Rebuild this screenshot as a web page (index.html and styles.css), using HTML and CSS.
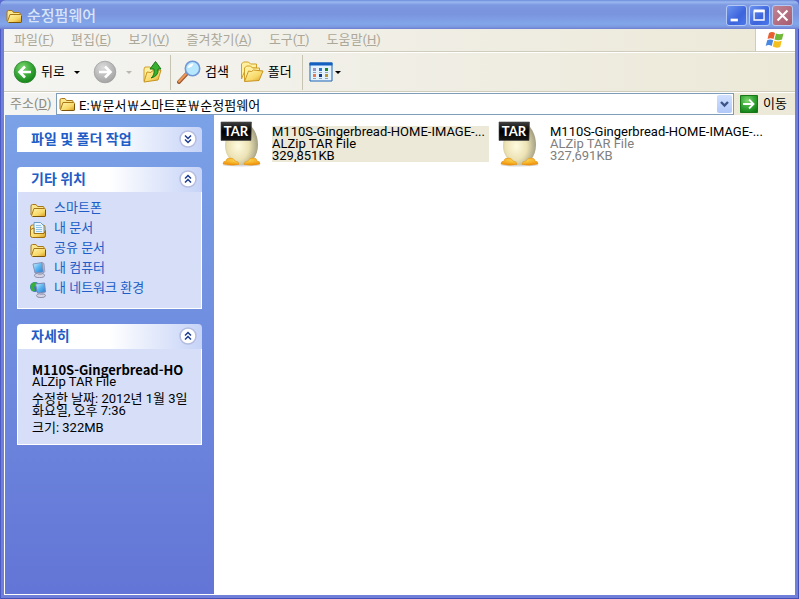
FILE: index.html
```html
<!DOCTYPE html>
<html lang="ko">
<head>
  <meta charset="UTF-8">
  <meta name="viewport" content="width=device-width, initial-scale=1.0">
  <title>순정펌웨어</title>
  <link rel="stylesheet" href="styles.css">
</head>
<body>
  <!-- shared icons -->
  <svg class="sprite" aria-hidden="true">
    <defs>
      <linearGradient id="gold" x1="0" y1="0" x2="1" y2="1">
        <stop offset="0" stop-color="#fff6b0"/>
        <stop offset="0.6" stop-color="#f8d868"/>
        <stop offset="1" stop-color="#d89a20"/>
      </linearGradient>
      <radialGradient id="green" cx="0.4" cy="0.3" r="0.8">
        <stop offset="0" stop-color="#7fd870"/>
        <stop offset="0.5" stop-color="#38a838"/>
        <stop offset="1" stop-color="#0c7a10"/>
      </radialGradient>
      <radialGradient id="grey" cx="0.4" cy="0.3" r="0.8">
        <stop offset="0" stop-color="#dcdcdc"/>
        <stop offset="1" stop-color="#9c9c9c"/>
      </radialGradient>
      <linearGradient id="screen" x1="0" y1="0" x2="1" y2="1">
        <stop offset="0" stop-color="#d8f4ff"/>
        <stop offset="0.5" stop-color="#58b4f0"/>
        <stop offset="1" stop-color="#2878d0"/>
      </linearGradient>
      <radialGradient id="egg" cx="0.4" cy="0.55" r="0.65">
        <stop offset="0" stop-color="#fffbe0"/>
        <stop offset="0.5" stop-color="#ece2b4"/>
        <stop offset="1" stop-color="#98947c"/>
      </radialGradient>
      <radialGradient id="foot" cx="0.5" cy="0.3" r="0.7">
        <stop offset="0" stop-color="#ffe860"/>
        <stop offset="1" stop-color="#f09008"/>
      </radialGradient>
      <linearGradient id="label" x1="0" y1="0" x2="0" y2="1">
        <stop offset="0" stop-color="#404040"/>
        <stop offset="0.5" stop-color="#000"/>
        <stop offset="1" stop-color="#181818"/>
      </linearGradient>
    </defs>
    <symbol id="folder" viewBox="0 0 16 16">
      <path d="M1 13V4q0-1.500 1.500-1.500H6L7.500 4.500H13q1 0 1 1V8" fill="#fbe58a" stroke="#a87818"/>
      <path d="M4 6.500h10.500q1 0 1 1v6q0 1-1 1H2.500q-1-.2-1-1z" fill="url(#gold)" stroke="#a87818"/>
      <path d="M3 14.500h11.500q1 0 1-1.200V8" fill="none" stroke="#7a5408"/>
    </symbol>
    <symbol id="documents" viewBox="0 0 16 16">
      <path d="M.5 13V5q0-2 2-2H13q2 0 2 2v9z" fill="#fbe58a" stroke="#a87818"/>
      <path d="M4 .5h6.500L14 4v7.500H4z" fill="#eaf6ff" stroke="#6c9cc8"/>
      <path d="M6 3.500h5M6 5.500h6M6 7.500h6M6 9.500h6" stroke="#90c4e4"/>
      <path d="M.5 7.500 4 6v5.500h10l1.500-3v5q0 2-1.500 2H2.500q-2 0-2-2z" fill="url(#gold)" stroke="#a07010"/>
    </symbol>
    <symbol id="computer" viewBox="0 0 16 16">
      <path d="M3 2 12 .5 13.500 10 5 11z" fill="url(#screen)" stroke="#8494bc"/>
      <path d="M12 .5l2 1 .8 8-1.300 1.500z" fill="#b4bcd4" stroke="#8088a8" stroke-width=".6"/>
      <ellipse cx="9.500" cy="13.400" rx="5" ry="2.200" fill="#d4d4e4" stroke="#7c7c98" stroke-width=".8"/>
      <path d="M8 11h4v2H8z" fill="#a8acc4"/>
    </symbol>
    <symbol id="network" viewBox="0 0 16 16">
      <circle cx="5" cy="5" r="5" fill="#3474cc"/>
      <path d="M.5 3q2-3 5.500-3L7 3 4 5l1 4-2 .5Q0 7 .5 3z" fill="#38b038"/>
      <path d="M5.500 2 14.500 1 15.500 10 7.500 11z" fill="url(#screen)" stroke="#7888b4"/>
      <ellipse cx="11" cy="13.600" rx="4.500" ry="2" fill="#d4d4e4" stroke="#7c7c98" stroke-width=".8"/>
      <path d="M10 11h3.500v2H10z" fill="#a8acc4"/>
    </symbol>
    <symbol id="folders" viewBox="0 0 24 24">
      <path d="M1.500 19V4l2-2h5l2 2h6v4H6z" fill="#fff0a0" stroke="#d0a028"/>
      <path d="M4.500 21V8l2-2h4l2 2h7v4" fill="#fff0a0" stroke="#d0a028"/>
      <path d="M4.500 21.500 8.500 11l3 .5 2-1.500 9.500 1-4 9.500z" fill="url(#gold)" stroke="#c89420"/>
    </symbol>
    <symbol id="tar" viewBox="0 0 48 48">
      <ellipse cx="22.500" cy="45" rx="19" ry="1.500" fill="#d8d8d8"/>
      <path d="M24 3C34 3 39 15 39 25 39 36 32 45 23 45S6 36 6 26C6 15 14 3 24 3z" fill="url(#egg)"/>
      <path d="M4 44q0-3 3-3 0-3 4-3 4 0 5 3 4 0 4 3.500-8 1.500-16-.5zM41 44q0-3-3-3 0-3-4-3-4 0-5 3-4 0-4 3.500 8 1.500 16-.5z" fill="url(#foot)" stroke="#e09018" stroke-width=".5"/>
      <path d="M2 2h30.500l-.5 18.500H2z" fill="url(#label)" stroke="#484848" stroke-width=".6"/>
    </symbol>
    <symbol id="up-chevrons" viewBox="0 0 18 18">
      <circle cx="9" cy="9" r="8" fill="#fff" stroke="#b4bce0" stroke-width="1.500"/>
      <path d="M6 8.500l3-3 3 3M6 12.500l3-3 3 3" fill="none" stroke="#1c3c90" stroke-width="1.500"/>
    </symbol>
    <symbol id="down-chevrons" viewBox="0 0 18 18">
      <circle cx="9" cy="9" r="8" fill="#fff" stroke="#b4bce0" stroke-width="1.500"/>
      <path d="M6 5.500l3 3 3-3M6 9.500l3 3 3-3" fill="none" stroke="#1c3c90" stroke-width="1.500"/>
    </symbol>
  </svg>

  <div class="window">
    <header class="titlebar">
      <svg class="icon16"><use href="#folder"/></svg>
      <h1>순정펌웨어</h1>
      <div class="controls">
        <button class="control" aria-label="최소화">
          <svg viewBox="0 0 21 21"><path d="M4 14h8v3H4z" fill="#fff"/></svg>
        </button>
        <button class="control" aria-label="최대화">
          <svg viewBox="0 0 21 21"><path d="M4.500 6v9.500h11V5h-11" fill="none" stroke="#fff" stroke-width="1.500"/><path d="M4 4h12v3H4z" fill="#fff"/></svg>
        </button>
        <button class="control close" aria-label="닫기">
          <svg viewBox="0 0 21 21"><path d="M5 5l11 11M16 5l-11 11" stroke="#fff" stroke-width="2.400"/></svg>
        </button>
      </div>
    </header>

    <div class="menubar">
      <nav class="menu">
        <button>파일(<u>F</u>)</button>
        <button>편집(<u>E</u>)</button>
        <button>보기(<u>V</u>)</button>
        <button>즐겨찾기(<u>A</u>)</button>
        <button>도구(<u>T</u>)</button>
        <button>도움말(<u>H</u>)</button>
      </nav>
      <div class="flag">
        <svg viewBox="0 0 20 18">
          <path d="M4 2q3-1.800 6 0L8.500 8q-3-1.500-6 0z" fill="#e86030"/>
          <path d="M11 2.400q3.500 1.500 7.500 0L17 8.500q-4 1.500-7.500 0z" fill="#70b838"/>
          <path d="M2.200 9.300q3-1.500 6 0L6.700 15q-3-1.800-6 0z" fill="#4888e0"/>
          <path d="M9.200 9.700q3.500 1.500 7.500 0L15.200 16q-4 1.500-7.500-.5z" fill="#f4c020"/>
        </svg>
      </div>
    </div>

    <div class="toolbar">
      <button class="tool">
        <svg class="icon24" viewBox="0 0 24 24">
          <circle cx="12" cy="12" r="10.800" fill="url(#green)" stroke="#2c8430" stroke-width=".8"/>
          <path d="M18 12H7M12 6.500 6.500 12l5.500 5.500" fill="none" stroke="#fff" stroke-width="2.600"/>
        </svg>
        <span>뒤로</span>
      </button>
      <button class="arrow" aria-label="뒤로 목록"></button>
      <button class="tool forward" aria-label="앞으로" disabled>
        <svg class="icon24" viewBox="0 0 24 24">
          <circle cx="12" cy="12" r="10.800" fill="url(#grey)" stroke="#a0a0a0" stroke-width=".8"/>
          <path d="M6 12h11M12 6.500l5.500 5.500-5.500 5.500" fill="none" stroke="#fff" stroke-width="2.600"/>
        </svg>
      </button>
      <button class="arrow" aria-label="앞으로 목록" disabled></button>
      <button class="tool up" aria-label="위로">
        <svg class="icon24" viewBox="0 0 24 24">
          <path d="M4 21V9l1-2h5l2 2h6v5" fill="#fff0a0" stroke="#d0a028"/>
          <path d="M4 22 7 12l4 .5 1-1.500 9-1-3 10z" fill="url(#gold)" stroke="#c89420"/>
          <path d="M11 18q4-3 3-9h-4l5.500-7.500L21 9h-3q1 7-7 9z" fill="#38b030" stroke="#187818"/>
        </svg>
      </button>
      <span class="separator"></span>
      <button class="tool">
        <svg class="icon24" viewBox="0 0 24 24">
          <path d="M2 22l8-8.500" stroke="#985830" stroke-width="4" stroke-linecap="round"/>
          <path d="M2 21.500l7-7.500" stroke="#f09858" stroke-width="2" stroke-linecap="round"/>
          <circle cx="15.500" cy="8.500" r="7.200" fill="#b8e8ff" stroke="#7098d8" stroke-width="1.600"/>
          <path d="M10.500 8q1-4.500 6-4.500-1 4-6 4.500z" fill="#fff"/>
        </svg>
        <span>검색</span>
      </button>
      <button class="tool folders">
        <svg class="icon24"><use href="#folders"/></svg>
        <span>폴더</span>
      </button>
      <span class="separator"></span>
      <button class="tool views" aria-label="보기">
        <svg class="icon24" viewBox="0 0 24 24">
          <path d="M1 3h22v18H1z" fill="#e4f2fe" stroke="#1c64b4"/>
          <path d="M.5 2.500h23v3H.5z" fill="#1460c0"/>
          <path d="M4 8h3v3H4z" fill="#9c90c0"/>
          <path d="M10 8h3v3h-3z" fill="#2c78cc"/>
          <path d="M16 8h3v3h-3z" fill="#208820"/>
          <path d="M4 14h3v3H4z" fill="#e87850"/>
          <path d="M10 14h3v3h-3z" fill="#103c88"/>
          <path d="M16 14h3v3h-3z" fill="#b89830"/>
          <path d="M4 12.500h3M10 12.500h3M16 12.500h3M4 18.500h3M10 18.500h3M16 18.500h3" stroke="#90a0b8"/>
        </svg>
      </button>
      <button class="arrow views-arrow" aria-label="보기 목록"></button>
    </div>

    <form class="address">
      <label for="path">주소(<u>D</u>)</label>
      <div class="combo">
        <svg class="icon16"><use href="#folder"/></svg>
        <input id="path" type="text" value="E:￦문서￦스마트폰￦순정펌웨어">
        <button type="button" class="drop" aria-label="주소 목록">
          <svg viewBox="0 0 15 18"><path d="M4 7l3.500 3.500L11 7" fill="none" stroke="#3c5488" stroke-width="2.400"/></svg>
        </button>
      </div>
      <button type="button" class="go">
        <svg viewBox="0 0 18 18">
          <path d="M.5.500h17v17H.5z" fill="url(#green)" stroke="#187818"/>
          <path d="M3 9h10M9 4.500 13.500 9 9 13.500" fill="none" stroke="#fff" stroke-width="1.800"/>
        </svg>
        <span>이동</span>
      </button>
    </form>

    <div class="content">
      <aside class="sidebar">
        <section class="panel">
          <div class="panel-head">
            <h2>파일 및 폴더 작업</h2>
            <button aria-label="펼치기"><svg><use href="#down-chevrons"/></svg></button>
          </div>
        </section>

        <section class="panel">
          <div class="panel-head">
            <h2>기타 위치</h2>
            <button aria-label="접기"><svg><use href="#up-chevrons"/></svg></button>
          </div>
          <ul class="places">
            <li><a href="#"><svg class="icon16"><use href="#folder"/></svg>스마트폰</a></li>
            <li><a href="#"><svg class="icon16"><use href="#documents"/></svg>내 문서</a></li>
            <li><a href="#"><svg class="icon16"><use href="#folder"/></svg>공유 문서</a></li>
            <li><a href="#"><svg class="icon16"><use href="#computer"/></svg>내 컴퓨터</a></li>
            <li><a href="#"><svg class="icon16"><use href="#network"/></svg>내 네트워크 환경</a></li>
          </ul>
        </section>

        <section class="panel">
          <div class="panel-head">
            <h2>자세히</h2>
            <button aria-label="접기"><svg><use href="#up-chevrons"/></svg></button>
          </div>
          <div class="details">
            <h3>M110S-Gingerbread-HO</h3>
            <p>ALZip TAR File</p>
            <p>수정한 날짜: 2012년 1월 3일<br>화요일, 오후 7:36</p>
            <p>크기: 322MB</p>
          </div>
        </section>
      </aside>

      <main class="files">
        <article class="file selected">
          <svg class="icon48" viewBox="0 0 48 48">
            <use href="#tar"/>
            <text x="17" y="16" class="tar-text" text-anchor="middle">TAR</text>
          </svg>
          <div class="file-info">
            <h4>M110S-Gingerbread-HOME-IMAGE-...</h4>
            <p>ALZip TAR File</p>
            <p>329,851KB</p>
          </div>
        </article>
        <article class="file">
          <svg class="icon48" viewBox="0 0 48 48">
            <use href="#tar"/>
            <text x="17" y="16" class="tar-text" text-anchor="middle">TAR</text>
          </svg>
          <div class="file-info">
            <h4>M110S-Gingerbread-HOME-IMAGE-...</h4>
            <p>ALZip TAR File</p>
            <p>327,691KB</p>
          </div>
        </article>
      </main>
    </div>
  </div>
</body>
</html>
```

FILE: styles.css
```css
* {
  box-sizing: border-box;
}

body {
  margin: 0;
  background: #5a6ad0;
  font-family: Roboto, "Noto Sans CJK KR", sans-serif;
  font-size: 13px;
  line-height: 16px;
  color: #000;
}

h1, h2, h3, h4, p, ul {
  margin: 0;
  padding: 0;
}

button {
  padding: 0;
  border: 0;
  background: none;
  font: inherit;
  color: inherit;
}

svg {
  display: block;
  flex: none;
}

.sprite {
  position: absolute;
  width: 0;
  height: 0;
}

.icon16 {
  width: 16px;
  height: 16px;
}

.icon24 {
  width: 24px;
  height: 24px;
}

.icon48 {
  width: 48px;
  height: 48px;
}

.window {
  min-height: 100vh;
  display: flex;
  flex-direction: column;
  padding: 0 4px 4px;
  border-radius: 6px 6px 0 0;
  background: #7080d8;
  box-shadow: inset 1px 0 #4c5ac4, inset -1px 0 #4450b8, inset 0 -1px #4450b8;
}

/* title bar */
.titlebar {
  display: flex;
  align-items: center;
  height: 29px;
  margin: 0 -4px;
  padding: 2px 6px 0;
  border-radius: 6px 6px 0 0;
  background: linear-gradient(#6c8cdc 0, #9cb8f0 2px, #7c98e0 5px, #7a94de 14px, #82a6ea 24px, #7c98e0 27px, #6c7cd0 29px);
}

.titlebar h1 {
  flex: 1;
  margin-left: 5px;
  font-size: 15px;
  font-weight: 500;
  color: #d8e4f8;
}

.controls {
  display: flex;
  gap: 2px;
}

.control {
  width: 21px;
  height: 21px;
  border: 1px solid #b4c8f4;
  border-radius: 3px;
  background: linear-gradient(135deg, #6c94f0, #3c64dc 60%, #4c78ec);
}

.control svg {
  width: 19px;
  height: 19px;
}

.control.close {
  background: linear-gradient(135deg, #c08494, #a85c70);
}

/* menu */
.menubar {
  display: flex;
  height: 23px;
  border-bottom: 1px solid #d0ccbc;
  background: linear-gradient(90deg, #f4f4f2, #ece9d8);
}

.menu {
  flex: 1;
  display: flex;
  align-items: center;
  gap: 17px;
  padding-left: 10px;
  color: #aca899;
}

.flag {
  width: 40px;
  padding: 2px 9px;
  border-left: 1px solid #d0ccbc;
  background: #fff;
}

.flag svg {
  width: 20px;
  height: 18px;
}

/* toolbar */
.toolbar {
  display: flex;
  align-items: center;
  height: 40px;
  padding-left: 9px;
  border-top: 1px solid #fff;
  border-bottom: 1px solid #d0ccbc;
  background: linear-gradient(90deg, #f4f4f2, #ece9d8);
}

.tool {
  display: flex;
  align-items: center;
  gap: 4px;
}

.forward {
  margin-left: 13px;
}

.up {
  margin-left: 8px;
}

.folders {
  margin-left: 11px;
}

.arrow {
  margin-left: 9px;
  border: 3px solid transparent;
  border-top-color: #000;
  border-bottom: 0;
}

.arrow:disabled {
  border-top-color: #b8b8b0;
}

.views-arrow {
  margin-left: 2px;
}

.separator {
  width: 1px;
  height: 35px;
  margin: 0 6px;
  background: #c8c4b4;
}

.folders + .separator {
  margin-left: 10px;
}

/* address */
.address {
  display: flex;
  align-items: center;
  height: 23px;
  border-top: 1px solid #fff;
  background: linear-gradient(90deg, #f4f4f2, #ece9d8);
}

.address label {
  width: 52px;
  padding-left: 6px;
  color: #8c8a80;
}

.combo {
  flex: 1;
  display: flex;
  align-items: center;
  height: 22px;
  padding: 0 1px 0 2px;
  border: 1px solid #7f9db9;
  background: #fff;
}

.combo input {
  flex: 1;
  min-width: 0;
  height: 20px;
  margin-left: 4px;
  padding: 0;
  border: 0;
  outline: 0;
  background: none;
  font: inherit;
}

.drop {
  width: 15px;
  height: 18px;
  border-radius: 2px;
  background: linear-gradient(#d0e0ff, #b0c8f8);
}

.go {
  display: flex;
  align-items: center;
  gap: 5px;
  padding: 0 8px 0 6px;
}

.go svg {
  width: 18px;
  height: 18px;
}

/* body */
.content {
  flex: 1;
  display: flex;
  border: 1px solid #fff;
  border-top: 0;
  background: #fff;
}

.sidebar {
  display: flex;
  flex-direction: column;
  gap: 15px;
  flex: none;
  width: 209px;
  padding: 12px;
  background: linear-gradient(#7ba2e7, #6375d6);
}

.panel-head {
  display: flex;
  align-items: center;
  justify-content: space-between;
  height: 25px;
  padding: 0 5px 2px 14px;
  border-radius: 4px 4px 0 0;
  background: linear-gradient(90deg, #fff 50%, #c6d3f7);
}

.panel-head h2 {
  font-size: 14px;
  font-weight: 700;
  color: #215dc6;
}

.panel-head svg {
  width: 18px;
  height: 18px;
}

.places {
  padding: 6px 12px 10px;
  border: 1px solid #fff;
  border-top: 0;
  background: #d6dff7;
  list-style: none;
}

.places a {
  display: flex;
  gap: 8px;
  height: 20px;
  line-height: 20px;
  color: #215dc6;
  text-decoration: none;
}

.places svg {
  margin-top: 4px;
}

.details {
  padding: 15px 14px 10px;
  border: 1px solid #fff;
  border-top: 0;
  background: #d6dff7;
  line-height: 12px;
  white-space: nowrap;
}

.details h3 {
  font-family: "Noto Sans CJK KR", sans-serif;
  font-size: 13px;
  font-weight: 700;
}

.details p + p {
  margin-top: 5px;
}

/* files */
.files {
  flex: 1;
  display: flex;
  flex-wrap: wrap;
  align-content: flex-start;
  gap: 8px;
  padding: 5px;
}

.file {
  display: flex;
  gap: 5px;
  width: 270px;
}

.file-info {
  align-self: center;
  width: 218px;
  line-height: 12px;
  color: #808080;
  white-space: nowrap;
}

.file h4 {
  font-size: 13px;
  font-weight: 400;
  color: #000;
}

.selected .file-info {
  background: #ece9d8;
  color: #000;
}

.tar-text {
  font-family: Lato, sans-serif;
  font-size: 13px;
  font-weight: 700;
  fill: #fff;
}
```
